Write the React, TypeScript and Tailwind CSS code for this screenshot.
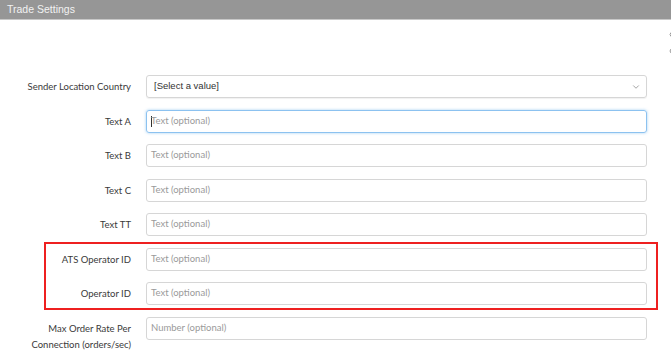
import { ChevronDown } from "lucide-react";

const rows = [
  { label: "Text A", placeholder: "Text (optional)", focused: true },
  { label: "Text B", placeholder: "Text (optional)" },
  { label: "Text C", placeholder: "Text (optional)" },
  { label: "Text TT", placeholder: "Text (optional)" },
];

function Field({ label, placeholder, focused }: { label: React.ReactNode; placeholder: string; focused?: boolean }) {
  return (
    <div className="flex items-start gap-[15px]">
      <div className="w-[131px] shrink-0 text-right text-[9.5px] leading-[23px] text-[#3a3a3a]">{label}</div>
      <div
        className={
          focused
            ? "relative flex h-[23px] w-[501px] items-center rounded-[3px] border border-[#8cc2f0] px-[4px] shadow-[0_0_3px_rgba(102,175,233,0.6)]"
            : "flex h-[23px] w-[501px] items-center rounded-[3px] border border-[#d6d6d6] px-[4px]"
        }
      >
        {focused && <span className="mr-[-1px] h-[11px] w-px bg-[#333]" />}
        <span className="text-[9.5px] text-[#9a9a9a]">{placeholder}</span>
      </div>
    </div>
  );
}

export default function App() {
  return (
    <div className="relative h-[353px] w-[671px] overflow-hidden bg-white font-['Lato',sans-serif]">
      <div className="flex h-[20px] items-center border-b border-[#c8c8c8] bg-[#969696] px-[7px] font-['Liberation_Sans',sans-serif] text-[10.5px] text-[#f2f2f2]">
        Trade Settings
      </div>

      <svg className="absolute right-0 top-[31px]" width="3" height="24" viewBox="0 0 3 24" fill="none" stroke="#9a9a9a" strokeWidth="1">
        <path d="M3 1.5 Q1 3.5 3 5.5" />
        <path d="M3 18 Q1 20 3 22" />
      </svg>

      <div className="flex flex-col gap-[11.5px] pt-[55px]">
        <div className="flex items-start gap-[15px]">
          <div className="w-[131px] shrink-0 text-right text-[9.5px] leading-[23px] text-[#3a3a3a]">Sender Location Country</div>
          <div className="flex h-[23px] w-[501px] items-center justify-between rounded-[3px] border border-[#d6d6d6] pl-[7px] pr-[5px] shadow-[0_1px_1px_rgba(0,0,0,0.06)]">
            <span className="font-['Liberation_Sans',sans-serif] text-[9.5px] text-[#333]">[Select a value]</span>
            <ChevronDown size={10} strokeWidth={1.6} className="text-[#777]" />
          </div>
        </div>

        {rows.map((r) => (
          <Field key={r.label} label={r.label} placeholder={r.placeholder} focused={r.focused} />
        ))}

        <div className="relative flex flex-col gap-[11.5px]">
          <div className="pointer-events-none absolute left-[44px] top-[-6px] h-[68px] w-[614px] border-2 border-[#ee2020]" />
          <Field label="ATS Operator ID" placeholder="Text (optional)" />
          <Field label="Operator ID" placeholder="Text (optional)" />
        </div>

        <Field
          label={
            <span className="block leading-[16px] pt-[4px]">
              Max Order Rate Per
              <br />
              Connection (orders/sec)
            </span>
          }
          placeholder="Number (optional)"
        />
      </div>
    </div>
  );
}
